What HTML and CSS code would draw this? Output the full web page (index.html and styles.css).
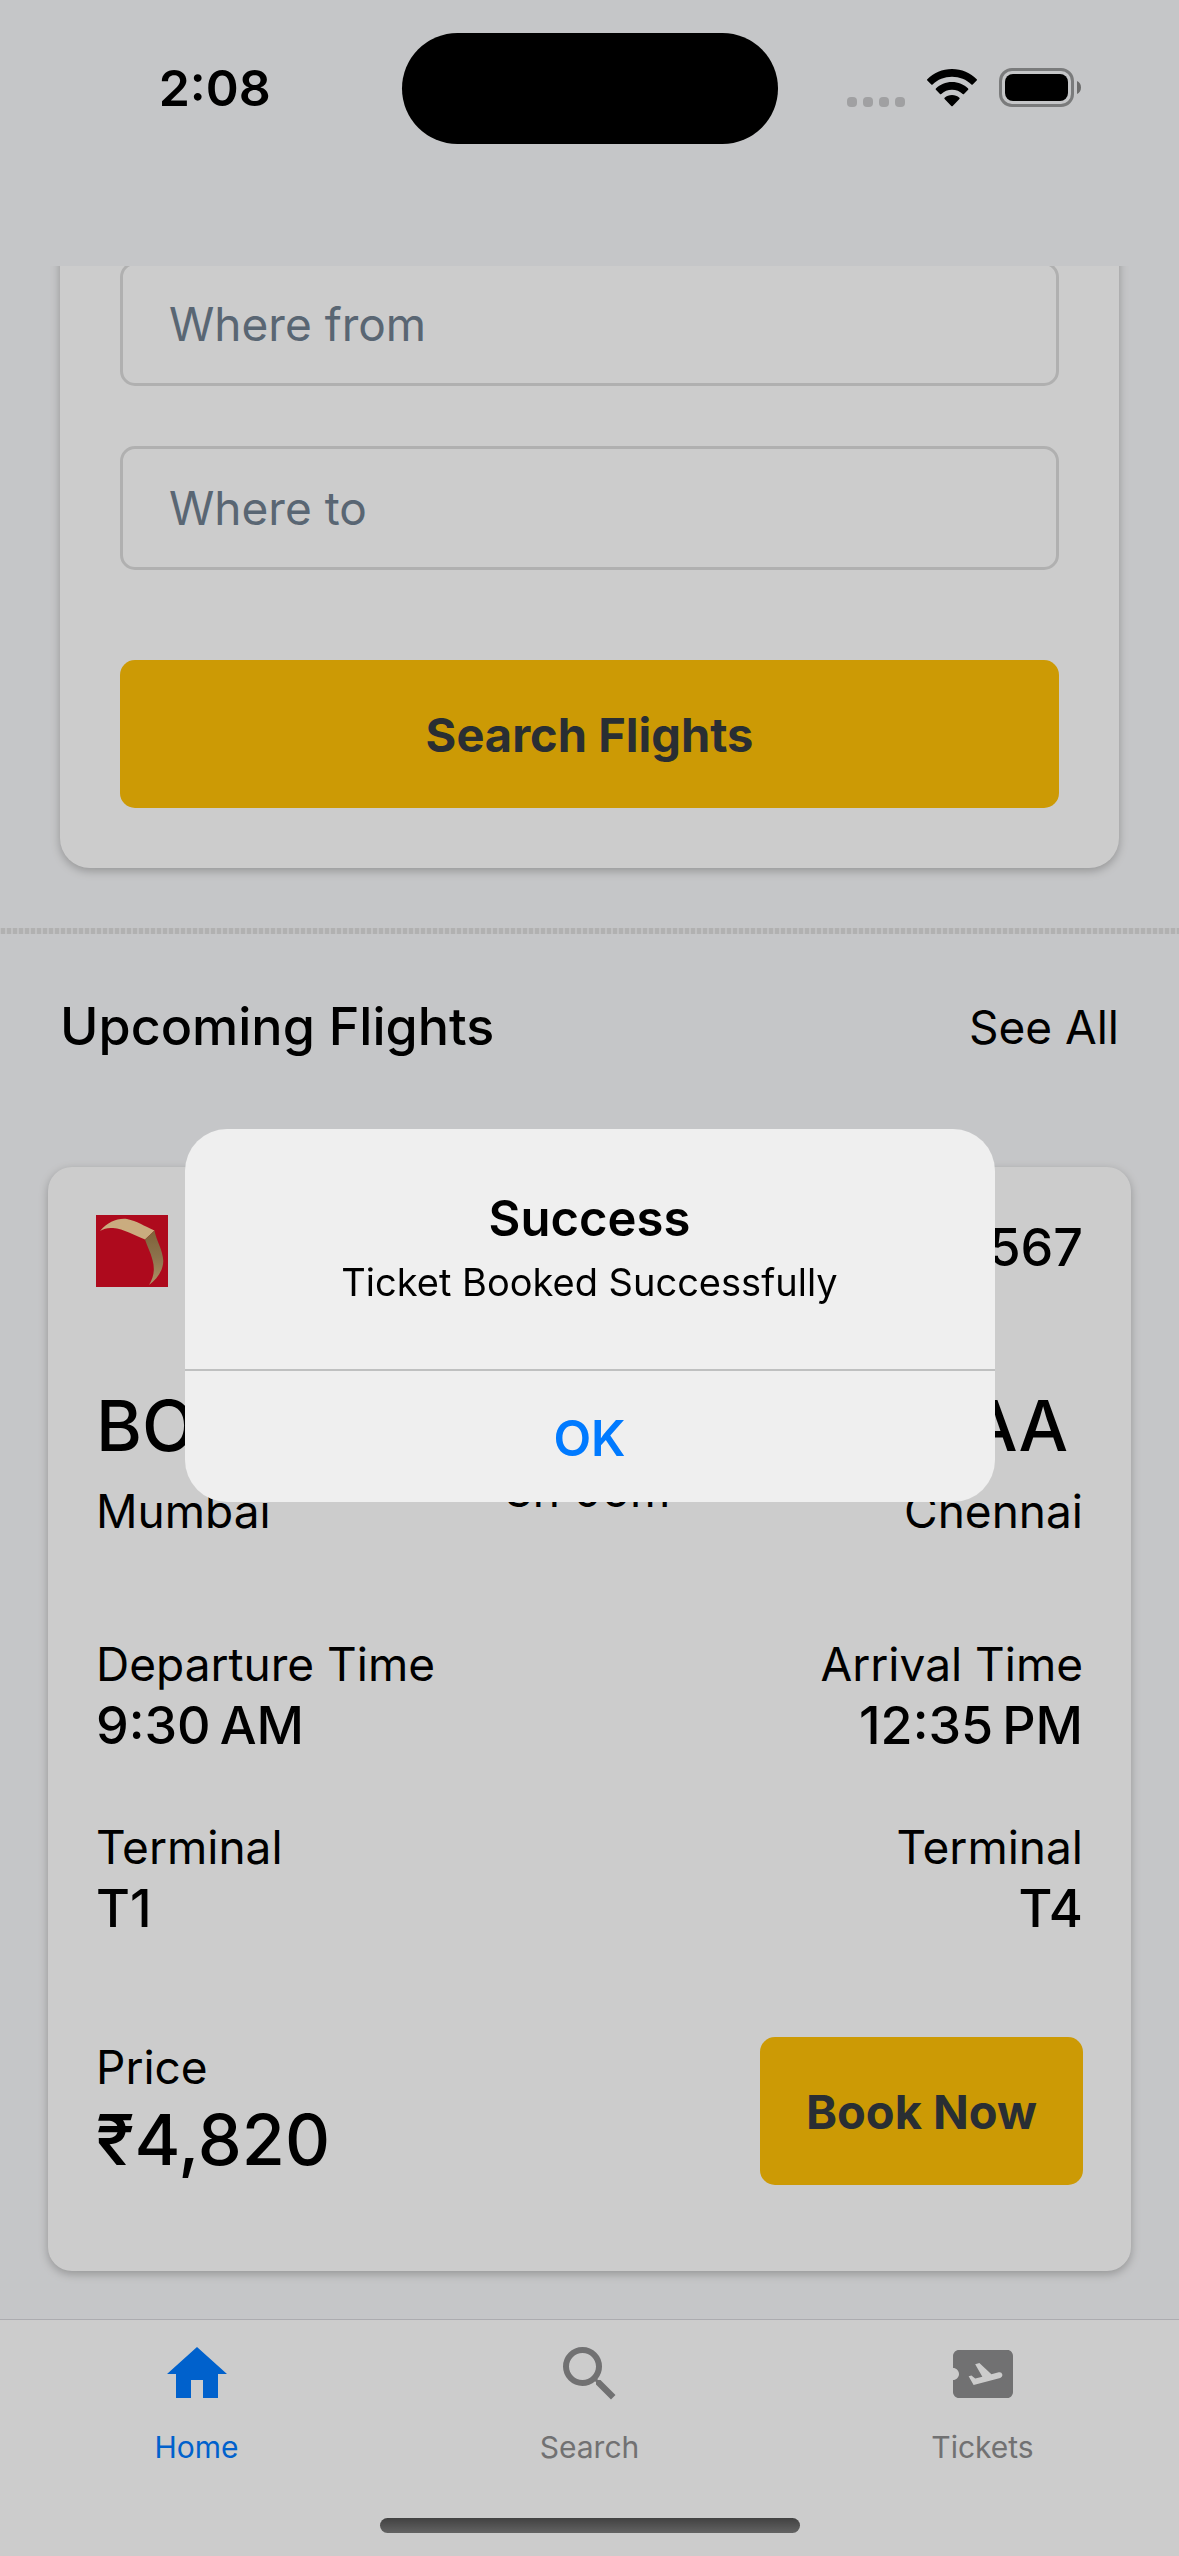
FILE: index.html
```html
<!DOCTYPE html>
<html lang="en">
<head>
<meta charset="utf-8">
<meta name="viewport" content="width=device-width, initial-scale=1">
<title>Flights</title>
<link rel="stylesheet" href="styles.css">
</head>
<body>
<div class="app">
  <header class="status">
    <time class="status-time">2:08</time>
    <div class="island"></div>
    <div class="status-icons">
      <svg width="58" height="38" viewBox="0 0 58 38" aria-hidden="true">
        <g fill="#c8c9cb"><rect y="28" width="10" height="10" rx="4"/><rect x="16" y="28" width="10" height="10" rx="4"/><rect x="32" y="28" width="10" height="10" rx="4"/><rect x="48" y="28" width="10" height="10" rx="4"/></g>
      </svg>
      <svg width="50" height="38" viewBox="0 0 50 38" aria-hidden="true">
        <path d="M25 0C15.300 0 6.500 3.900 0.300 10.200C-.1 10.600 -.1 11 .3 11.400L4.300 15.500C4.700 15.900 5.200 15.900 5.600 15.500C10.600 10.600 17.500 7.800 25 7.800C32.500 7.800 39.400 10.600 44.400 15.500C44.800 15.900 45.300 15.900 45.700 15.500L49.700 11.400C50.100 11 50.100 10.600 49.700 10.200C43.500 3.900 34.700 0 25 0Z"/>
        <path d="M25 13C18.700 13 13 15.500 8.900 19.500C8.500 19.900 8.500 20.400 8.900 20.800L13 24.900C13.400 25.300 13.900 25.300 14.300 24.900C17.100 22.300 20.900 20.700 25 20.700C29.100 20.700 32.900 22.300 35.700 24.900C36.100 25.300 36.600 25.300 37 24.900L41.100 20.800C41.500 20.400 41.500 19.900 41.100 19.500C37 15.500 31.300 13 25 13Z"/>
        <path d="M25 26C22.200 26 19.600 27 17.600 28.700C17.200 29.100 17.200 29.600 17.600 30L24.300 37C24.700 37.400 25.300 37.400 25.700 37L32.400 30C32.800 29.600 32.800 29.100 32.400 28.700C30.400 27 27.800 26 25 26Z"/>
      </svg>
      <svg width="82" height="39" viewBox="0 0 82 39" aria-hidden="true">
        <rect x="1.500" y="1.500" width="72" height="36" rx="11.500" fill="none" stroke="#999a9b" stroke-width="3"/>
        <rect x="6" y="6" width="63" height="27" rx="8"/>
        <path d="M78 13C80.500 14 82 16.500 82 19.500S80.500 25 78 26Z" fill="#888"/>
      </svg>
    </div>
  </header>

  <main class="content">
    <form class="card search-card">
      <input class="field" type="text" placeholder="Where from" aria-label="Where from">
      <input class="field" type="text" placeholder="Where to" aria-label="Where to">
      <button class="btn btn-search" type="button">Search Flights</button>
    </form>

    <hr class="divider">

    <section class="upcoming">
      <div class="section-head">
        <h2 class="section-title">Upcoming Flights</h2>
        <a class="see-all" href="#all">See All</a>
      </div>

      <article class="card flight">
        <div class="row airline">
          <svg width="72" height="72" viewBox="0 0 72 72" role="img" aria-label="Airline">
            <defs><linearGradient id="fold" x1="0" y1="0" x2="0" y2="1"><stop offset="0" stop-color="#a07c48"/><stop offset=".5" stop-color="#b09060"/><stop offset="1" stop-color="#dcb880"/></linearGradient></defs>
            <rect width="72" height="72" fill="#da0d25"/>
            <path d="M4 16C12 7 21 3 31 4C41 6 48 11 58.500 15.500L49 24.500C38 20 28 14 17 13C12 12.500 8 13.500 4 16Z" fill="#fdd79f"/>
            <path d="M49 24.500L58.500 15.500C60 25 67 35 67.300 46C67 56 61 64 53 70C58 62 59 54 56.500 45C54.500 37 51 31 49 24.500Z" fill="url(#fold)"/>
          </svg>
          <span class="value">AI 4567</span>
        </div>

        <div class="row route">
          <div><div class="code">BOM</div><div class="label">Mumbai</div></div>
          <div class="label duration">3h 05m</div>
          <div><div class="code">MAA</div><div class="label">Chennai</div></div>
        </div>

        <div class="row">
          <div><div class="label">Departure Time</div><div class="value">9:30&#8239;AM</div></div>
          <div class="end"><div class="label">Arrival Time</div><div class="value">12:35&#8239;PM</div></div>
        </div>

        <div class="row">
          <div><div class="label">Terminal</div><div class="value">T1</div></div>
          <div class="end"><div class="label">Terminal</div><div class="value">T4</div></div>
        </div>

        <div class="row booking">
          <div><div class="label">Price</div><div class="code">₹4,820</div></div>
          <button class="btn btn-book" type="button">Book Now</button>
        </div>
      </article>
    </section>
  </main>

  <nav class="tabs">
    <div class="tab-list">
      <a class="tab tab-active" href="#home">
        <svg class="tab-icon" viewBox="0 0 24 24" aria-hidden="true"><path d="M10 20v-6h4v6h5v-8h3L12 3 2 12h3v8z"/></svg>
        Home
      </a>
      <a class="tab" href="#search">
        <svg class="tab-icon" viewBox="0 0 24 24" aria-hidden="true"><path d="M15.500 14h-.79l-.28-.27A6.471 6.471 0 0 0 16 9.500 6.500 6.500 0 1 0 9.500 16c1.610 0 3.090-.59 4.230-1.570l.27.28v.79l5 4.990L20.490 19l-4.990-5zm-6 0C7.010 14 5 11.990 5 9.500S7.010 5 9.500 5 14 7.010 14 9.500 11.990 14 9.500 14z"/></svg>
        Search
      </a>
      <a class="tab" href="#tickets">
        <svg class="tab-icon" viewBox="0 0 24 24" aria-hidden="true"><path d="M20.190 4H4c-1.100 0-1.990.9-1.990 2v4c1.100 0 1.990.9 1.990 2s-.89 2-2 2v4c0 1.100.9 2 2 2h16.190c1 0 1.810-.9 1.810-2V6c0-1.100-.81-2-1.810-2zm-2.460 9.300-8.860 2.360-1.660-2.880.93-.25 1.260.99 2.390-.64-2.400-4.160 1.400-.38 4.010 3.740 2.440-.65a.967.967 0 0 1 1.180.68c.15.510-.16 1.040-.69 1.190z"/></svg>
        Tickets
      </a>
    </div>
    <div class="home-indicator"></div>
  </nav>
</div>

<div class="overlay">
  <div class="alert" role="alertdialog" aria-labelledby="alert-title" aria-describedby="alert-text">
    <div class="alert-body">
      <h1 class="alert-title" id="alert-title">Success</h1>
      <p class="alert-text" id="alert-text">Ticket Booked Successfully</p>
    </div>
    <button class="alert-ok" type="button">OK</button>
  </div>
</div>
</body>
</html>
```

FILE: styles.css
```css
* {
  box-sizing: border-box;
}

body {
  margin: 0;
  background: #f7f8fa;
  color: #000;
  font-family: Inter, "Liberation Sans", sans-serif;
}

h1, h2, p {
  margin: 0;
}

svg {
  display: block;
}

a {
  color: inherit;
  text-decoration: none;
}

button, input {
  font-family: inherit;
}

.app {
  display: flex;
  flex-direction: column;
  min-height: 100vh;
}

/* Status bar */
.status {
  display: grid;
  grid-template-columns: 1fr auto 1fr;
  align-items: start;
  height: 266px;
  padding-top: 33px;
}

.status-time {
  padding: 25px 0 0 28px;
  text-align: center;
  font-size: 50px;
  line-height: 60px;
  font-weight: 600;
}

.island {
  width: 376px;
  height: 111px;
  border-radius: 56px;
  background: #000;
}

.status-icons {
  display: flex;
  align-items: center;
  justify-content: center;
  gap: 22px;
  padding-top: 35px;
  padding-right: 28px;
}

/* Scrolling content */
.content {
  flex: 1;
  overflow: hidden;
}

.card {
  background: #fff;
  box-shadow: 0 3px 10px rgba(0, 0, 0, 0.25);
}

.search-card {
  display: flex;
  flex-direction: column;
  gap: 60px;
  margin: -64px 60px 60px;
  padding: 60px;
  border-radius: 30px;
}

.field {
  width: 100%;
  height: 124px;
  padding: 0 46px;
  border: 3px solid #ddd;
  border-radius: 15px;
  background: #fff;
  font-size: 46px;
}

.field::placeholder {
  color: #708090;
  opacity: 1;
}

.btn {
  height: 148px;
  border: 0;
  border-radius: 15px;
  background: #ffc107;
  color: #343a40;
  font-size: 47px;
  font-weight: 700;
}

.btn-search {
  margin-top: 30px;
}

.divider {
  height: 6px;
  margin: 0;
  border: 0;
  background: repeating-linear-gradient(90deg, #f0f1f2 0 1px, #dedede 1px 5px, #f0f1f2 5px 6px);
}

.section-head {
  display: flex;
  align-items: center;
  justify-content: space-between;
  padding: 60px 60px 108px;
}

.section-title {
  font-size: 52px;
  line-height: 65px;
  font-weight: 500;
}

.see-all {
  font-size: 46px;
  line-height: 58px;
}

/* Flight card */
.flight {
  display: flex;
  flex-direction: column;
  gap: 60px;
  margin: 0 48px 48px;
  padding: 48px 48px 86px;
  border-radius: 24px;
}

.row {
  display: flex;
  align-items: center;
  justify-content: space-between;
}

.airline {
  align-items: flex-start;
}

.route {
  padding: 35px 0;
}

.route .code {
  margin-bottom: 12px;
}

.label {
  font-size: 46px;
  line-height: 58px;
}

.value {
  font-size: 52px;
  line-height: 65px;
  font-weight: 500;
}

.code {
  font-size: 70px;
  line-height: 88px;
  font-weight: 500;
}

.duration {
  align-self: flex-end;
  padding-bottom: 21px;
}

.end {
  text-align: right;
}

.booking {
  padding-top: 36px;
}

.btn-book {
  padding: 0 46px;
}

/* Tab bar */
.tabs {
  padding: 12px 0 24px;
  border-top: 1px solid #d8d8dc;
  background: #fff;
}

.tab-list {
  display: grid;
  grid-template-columns: repeat(3, 1fr);
}

.tab {
  display: flex;
  flex-direction: column;
  align-items: center;
  gap: 12px;
  color: #8e8e8f;
  font-size: 30px;
  line-height: 38px;
}

.tab-active {
  color: #007aff;
}

.tab-icon {
  width: 72px;
  height: 84px;
  fill: currentColor;
}

.home-indicator {
  width: 420px;
  height: 15px;
  margin: 52px auto 0;
  border-radius: 8px;
  background: linear-gradient(#525252, #7c7c7c);
}

/* Alert */
.overlay {
  position: fixed;
  inset: 0;
  display: flex;
  align-items: center;
  justify-content: center;
  padding: 177px 48px 102px;
  background: rgba(0, 0, 0, 0.2);
}

.alert {
  width: 810px;
  border-radius: 42px;
  overflow: hidden;
  background: #efefef;
  text-align: center;
}

.alert-body {
  padding: 58px 48px 58px;
}

.alert-title {
  margin-bottom: 2px;
  font-size: 49px;
  line-height: 64px;
  font-weight: 600;
}

.alert-text {
  font-size: 38px;
  line-height: 58px;
}

.alert-ok {
  display: block;
  width: 100%;
  height: 133px;
  padding: 4px 0 0;
  border: 0;
  border-top: 2px solid #bfc0c0;
  background: transparent;
  color: #007aff;
  font-size: 49px;
  font-weight: 600;
}
```
